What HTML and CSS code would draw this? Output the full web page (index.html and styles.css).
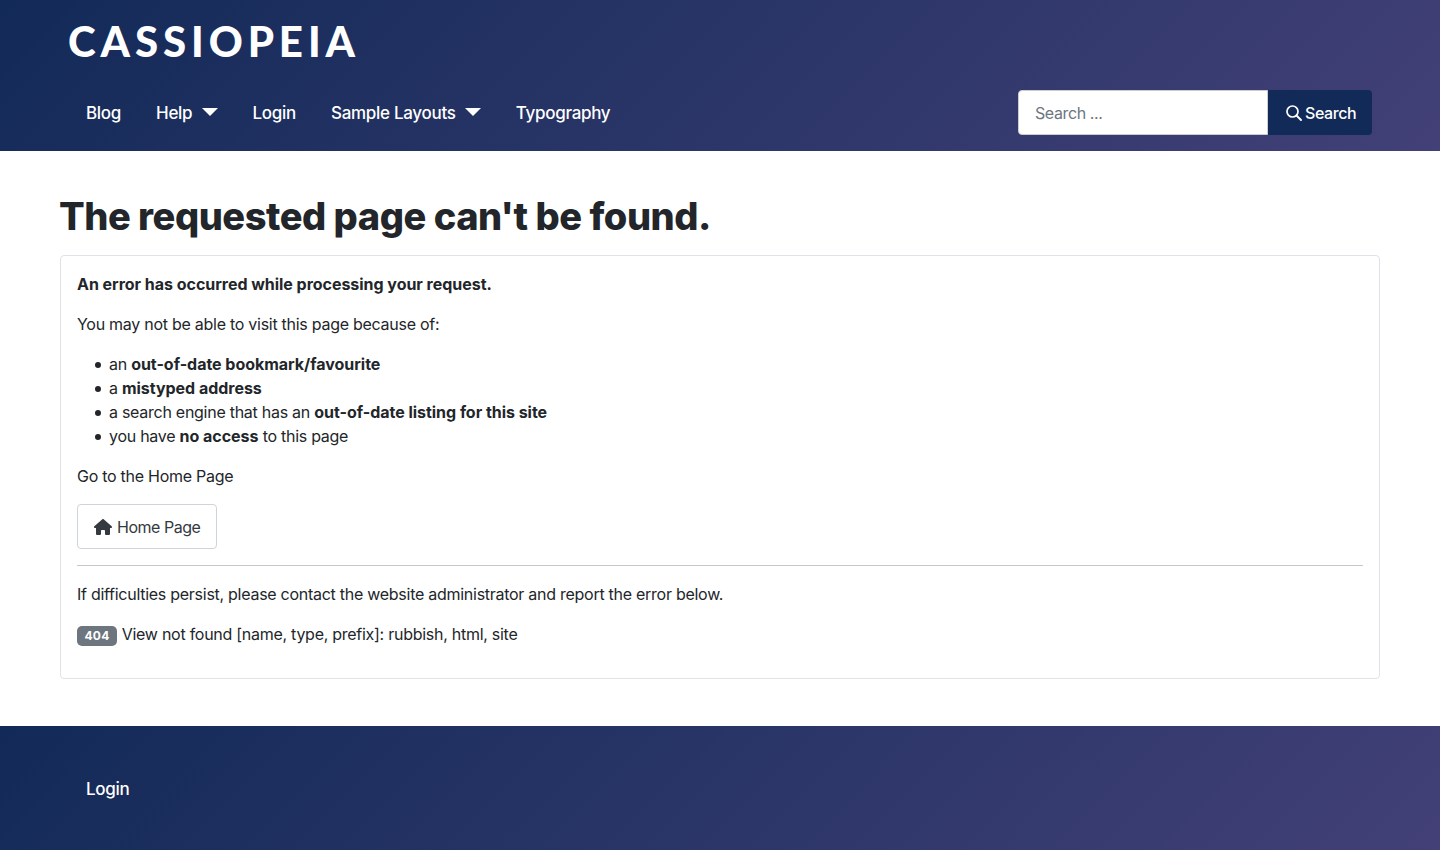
FILE: index.html
```html
<!DOCTYPE html>
<html lang="en">
<head>
    <meta charset="UTF-8">
    <meta name="viewport" content="width=device-width, initial-scale=1.0">
    <title>The requested page can't be found.</title>
    <link rel="stylesheet" href="styles.css">
</head>
<body>
    <header class="site-header">
        <div class="brand"><a class="brand-logo" href="#">CASSIOPEIA</a></div>
        <div class="nav-row">
            <nav class="main-nav">
                <a href="#">Blog</a>
                <a href="#">Help <span class="caret"></span></a>
                <a href="#">Login</a>
                <a href="#">Sample Layouts <span class="caret"></span></a>
                <a href="#">Typography</a>
            </nav>
            <form class="search-form">
                <input class="search-input" type="search" placeholder="Search ...">
                <button class="search-button" type="button">
                    <svg class="search-icon" viewBox="0 0 16 16" width="16" height="16"><circle cx="6.500" cy="6.500" r="5.500" fill="none" stroke="currentColor" stroke-width="1.700"/><path d="M10.500 10.500 15 15" fill="none" stroke="currentColor" stroke-width="1.900" stroke-linecap="round"/></svg>
                    Search
                </button>
            </form>
        </div>
    </header>

    <main class="content">
        <h1>The requested page can't be found.</h1>
        <div class="error-card">
            <p><strong>An error has occurred while processing your request.</strong></p>
            <p>You may not be able to visit this page because of:</p>
            <ul>
                <li>an <strong>out-of-date bookmark/favourite</strong></li>
                <li>a <strong>mistyped address</strong></li>
                <li>a search engine that has an <strong>out-of-date listing for this site</strong></li>
                <li>you have <strong>no access</strong> to this page</li>
            </ul>
            <p>Go to the Home Page</p>
            <p class="home-row">
                <a class="home-button" href="#">
                    <svg class="home-icon" viewBox="0 0 576 512" width="18" height="16"><path fill="currentColor" d="M575.800 255.500c0 18-15 32.100-32 32.100h-32l.7 160.200c0 2.700-.2 5.400-.5 8.100V472c0 22.100-17.900 40-40 40H456c-1.100 0-2.200 0-3.300-.1c-1.400 .1-2.800 .1-4.200 .1H416 392c-22.100 0-40-17.900-40-40V448 384c0-17.700-14.300-32-32-32H256c-17.700 0-32 14.300-32 32v64 24c0 22.100-17.900 40-40 40H160 128.100c-1.500 0-3-.1-4.500-.2c-1.200 .1-2.400 .2-3.600 .2H104c-22.100 0-40-17.900-40-40V360c0-.9 0-1.900 .1-2.800V287.600H32c-18 0-32-14-32-32.100c0-9 3-17 10-24L266.400 8c7-7 15-8 22-8s15 2 21 7L564.800 231.500c8 7 12 15 11 24z"/></svg>
                    Home Page
                </a>
            </p>
            <hr>
            <p>If difficulties persist, please contact the website administrator and report the error below.</p>
            <p><span class="badge">404</span> View not found [name, type, prefix]: rubbish, html, site</p>
        </div>
    </main>

    <footer class="site-footer">
        <a href="#">Login</a>
    </footer>
</body>
</html>
```

FILE: styles.css
```css
* {
    box-sizing: border-box;
}
body {
    margin: 0;
    font-family: Inter, "Liberation Sans", sans-serif;
    font-size: 16px;
    line-height: 24px;
    letter-spacing: -0.27px;
    color: #22262a;
    background: #fff;
}
a {
    color: inherit;
    text-decoration: none;
}
.site-header {
    height: 151px;
    padding: 16px 68px 0;
    color: #fff;
    background: linear-gradient(135deg, #122a58 0%, #424077 100%);
}
.brand {
    height: 50px;
}
.brand-logo {
    font-family: Lato, sans-serif;
    font-size: 42px;
    line-height: 50px;
    font-weight: 900;
    letter-spacing: 4.9px;
}
.nav-row {
    display: flex;
    justify-content: space-between;
    align-items: center;
    margin-top: 24px;
}
.main-nav {
    display: flex;
    gap: 35px;
    padding-left: 18px;
    font-size: 17px;
    font-weight: 500;
    letter-spacing: -0.3px;
}
.caret {
    display: inline-block;
    width: 0;
    height: 0;
    margin-left: 5px;
    vertical-align: 3px;
    border-top: 8px solid #fff;
    border-left: 8px solid transparent;
    border-right: 8px solid transparent;
}
.search-form {
    display: flex;
    height: 45px;
}
.search-input {
    width: 250px;
    padding: 0 16px;
    border: 1px solid #cdcdcd;
    border-radius: 4px 0 0 4px;
    font: inherit;
    letter-spacing: -0.4px;
    color: #22262a;
    background: #fff;
}
.search-input::placeholder {
    color: #6d757e;
}
.search-button {
    display: flex;
    align-items: center;
    gap: 3px;
    width: 104px;
    padding: 0 0 0 18px;
    border: 0;
    border-radius: 0 4px 4px 0;
    font: inherit;
    font-weight: 500;
    letter-spacing: -0.4px;
    color: #fff;
    background: #122a58;
}
.search-icon {
    flex-shrink: 0;
}
.content {
    padding: 40px 60px 47px;
}
h1 {
    margin: 0 0 14px -1px;
    font-size: 38px;
    line-height: 50px;
    font-weight: 800;
    letter-spacing: -0.47px;
    color: #22262a;
}
.error-card {
    height: 424px;
    padding: 16px;
    border: 1px solid #dfe3e7;
    border-radius: 4px;
}
p {
    margin: 0 0 16px;
}
ul {
    margin: 0 0 16px;
    padding-left: 32px;
    list-style: none;
}
li::before {
    content: "";
    display: inline-block;
    width: 6px;
    height: 6px;
    margin-left: -14px;
    margin-right: 8px;
    border-radius: 50%;
    background: #22262a;
    vertical-align: 2px;
}
strong {
    font-weight: 700;
    letter-spacing: -0.03px;
}
.home-row {
    margin-bottom: 16px;
}
.home-button {
    display: inline-flex;
    align-items: center;
    gap: 5px;
    height: 45px;
    padding: 0 16px;
    border: 1px solid #ced4da;
    border-radius: 4px;
    letter-spacing: -0.48px;
    color: #343a40;
}
hr {
    margin: 16px 0;
    border: 0;
    border-top: 1px solid #c8c8c8;
}
.badge {
    display: inline-block;
    width: 40px;
    margin-right: 0.5px;
    padding: 3px 0;
    border-radius: 5px;
    font-size: 12px;
    line-height: 14px;
    font-weight: 700;
    letter-spacing: 0.2px;
    text-align: center;
    color: #fff;
    background: #6d757e;
}
.site-footer {
    height: 124px;
    padding: 51px 86px 0;
    font-size: 17px;
    font-weight: 500;
    letter-spacing: -0.3px;
    color: #fff;
    background: linear-gradient(135deg, #122a58 0%, #424077 100%);
}
```
